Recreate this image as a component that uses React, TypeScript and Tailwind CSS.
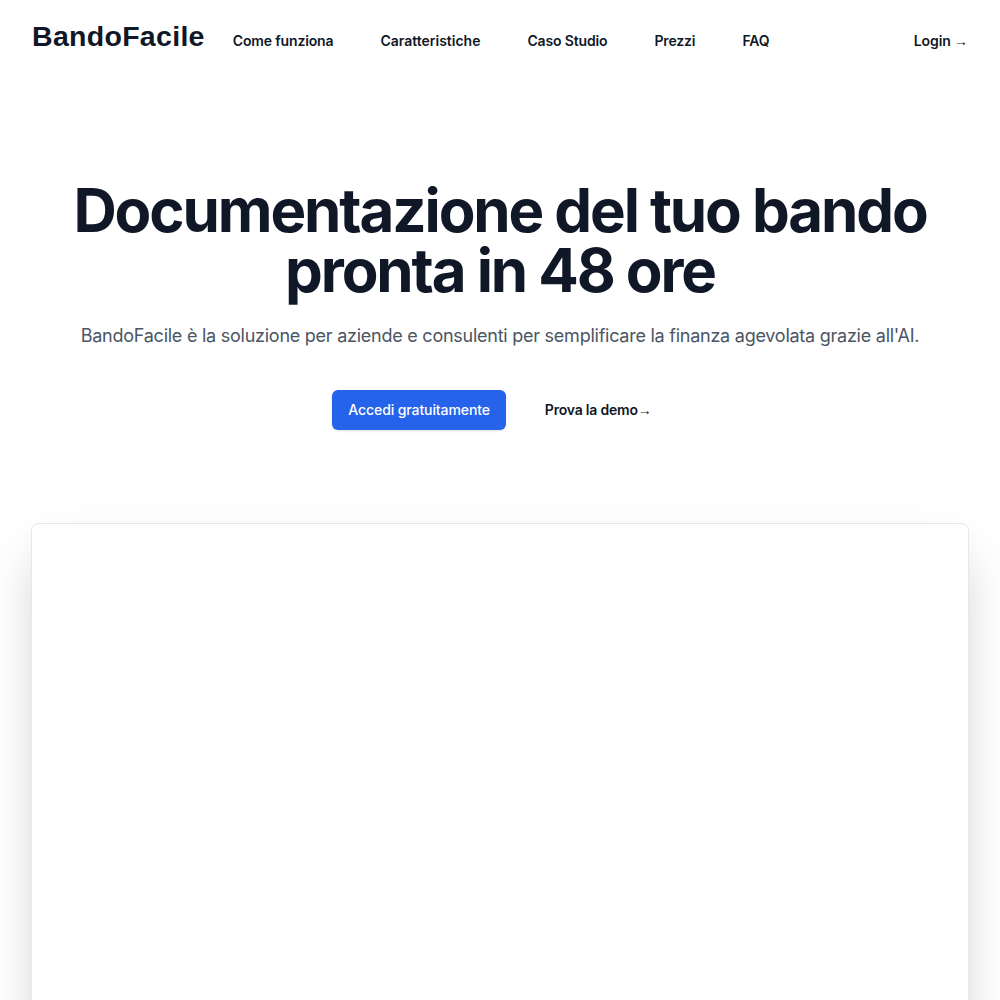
export default function App() {
  return (
    <div className="min-h-screen bg-white font-['Inter',sans-serif] text-gray-900 overflow-hidden">
      <header className="flex items-center justify-between px-8 h-20">
        <div className="flex items-baseline pb-[6px]">
          <span className="font-['Liberation_Sans',Arial,sans-serif] font-bold text-[28.5px] tracking-[0.3px] text-gray-900 leading-none">BandoFacile</span>
          <nav className="ml-[28px] flex items-baseline gap-x-[47px] tracking-[-0.15px]">
            <a className="text-sm font-semibold leading-6 text-gray-900" href="#">Come funziona</a>
            <a className="text-sm font-semibold leading-6 text-gray-900 tracking-[0px]" href="#">Caratteristiche</a>
            <a className="text-sm font-semibold leading-6 text-gray-900" href="#">Caso Studio</a>
            <a className="text-sm font-semibold leading-6 text-gray-900" href="#">Prezzi</a>
            <a className="text-sm font-semibold leading-6 text-gray-900" href="#">FAQ</a>
          </nav>
        </div>
        <a className="text-sm font-semibold leading-6 text-gray-900 tracking-[-0.1px] pt-[2px]" href="#">
          Login <span aria-hidden="true" className="font-['Liberation_Sans',sans-serif] font-normal">→</span>
        </a>
      </header>

      <section className="pt-[100px] text-center px-8">
        <h1 className="text-[60px] font-bold tracking-[-0.035em] leading-[60px] text-gray-900">
          Documentazione del tuo bando
          <br />
          pronta in 48 ore
        </h1>
        <p className="mt-5 text-lg leading-8 tracking-[-0.25px] text-gray-600">
          BandoFacile è la soluzione per aziende e consulenti per semplificare la finanza agevolata grazie all'AI.
        </p>
        <div className="mt-[38px] flex items-center justify-center gap-x-[39px] pr-4">
          <a href="#" className="rounded-md bg-[#2563eb] px-4 py-2.5 text-sm leading-5 font-medium tracking-[-0.1px] text-white shadow-sm">Accedi gratuitamente</a>
          <a href="#" className="text-sm font-semibold leading-6 tracking-[-0.2px] text-gray-900">
            Prova la demo<span aria-hidden="true" className="font-['Liberation_Sans',sans-serif] font-normal">→</span>
          </a>
        </div>
      </section>

      <div className="mt-[93px] px-[31px]">
        <div className="h-[600px] rounded-lg border border-gray-200 bg-white shadow-2xl"></div>
      </div>
    </div>
  );
}
